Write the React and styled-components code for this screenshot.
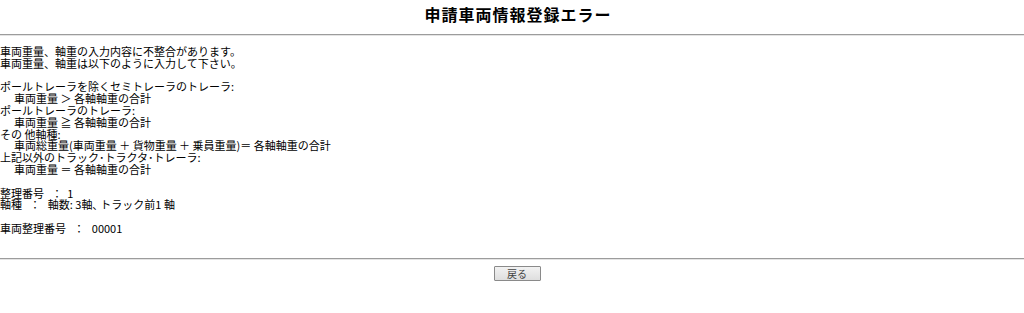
import React from "react";
import styled, { createGlobalStyle } from "styled-components";

const Global = createGlobalStyle`
  html, body { margin: 0; padding: 0; background: #fff; }
  body { font-family: "Noto Sans CJK JP", "Noto Sans", sans-serif; color: #000; }
`;

const Page = styled.div`
  display: flex;
  flex-direction: column;
  width: 1024px;
`;

const Title = styled.h1`
  margin: 0;
  padding: 2px 0 0 12px;
  height: 32px;
  font-size: 16px;
  line-height: 24px;
  font-weight: 700;
  text-align: center;
  letter-spacing: 1px;
`;

const Rule = styled.div`
  height: 0;
  border-top: 1px solid #9c9c9c;
  border-bottom: 1px solid #e4e4e4;
`;

const Body = styled.div`
  display: flex;
  flex-direction: column;
  padding: 10px 0 23px 0;
  font-size: 11px;
  line-height: 11.8px;
`;

const Line = styled.div`
  height: 11.8px;
  white-space: pre;
  padding-left: ${(p) => (p.$indent ? "14px" : "0")};
`;

const Blank = styled.div`
  height: 11.8px;
`;

const Footer = styled.div`
  display: flex;
  justify-content: center;
  padding: 6px 0 0 10px;
`;

const Button = styled.button`
  width: 47px;
  height: 15px;
  padding: 0;
  font-family: "Noto Sans CJK JP", sans-serif;
  font-size: 10px;
  line-height: 13px;
  color: #444;
  background: linear-gradient(#f2f2f2, #dedede);
  border: 1px solid #8a8a8a;
  border-radius: 1px;
`;

export default function App() {
  return (
    <>
      <Global />
      <Page>
        <Title>申請車両情報登録エラー</Title>
        <Rule />
        <Body>
          <Line>車両重量、軸重の入力内容に不整合があります。</Line>
          <Line>車両重量、軸重は以下のように入力して下さい。</Line>
          <Blank />
          <Line>ポールトレーラを除くセミトレーラのトレーラ:</Line>
          <Line $indent>車両重量 ＞ 各軸軸重の合計</Line>
          <Line>ポールトレーラのトレーラ:</Line>
          <Line $indent>車両重量 ≧ 各軸軸重の合計</Line>
          <Line>その 他軸種:</Line>
          <Line $indent>車両総重量(車両重量 ＋ 貨物重量 ＋ 乗員重量)＝ 各軸軸重の合計</Line>
          <Line>上記以外のトラック･トラクタ･トレーラ:</Line>
          <Line $indent>車両重量 ＝ 各軸軸重の合計</Line>
          <Blank />
          <Line>整理番号   ：  1</Line>
          <Line>軸種   ：   軸数: 3軸､ トラック前1 軸</Line>
          <Blank />
          <Line>車両整理番号   ：   00001</Line>
        </Body>
        <Rule />
        <Footer>
          <Button type="button">戻る</Button>
        </Footer>
      </Page>
    </>
  );
}
